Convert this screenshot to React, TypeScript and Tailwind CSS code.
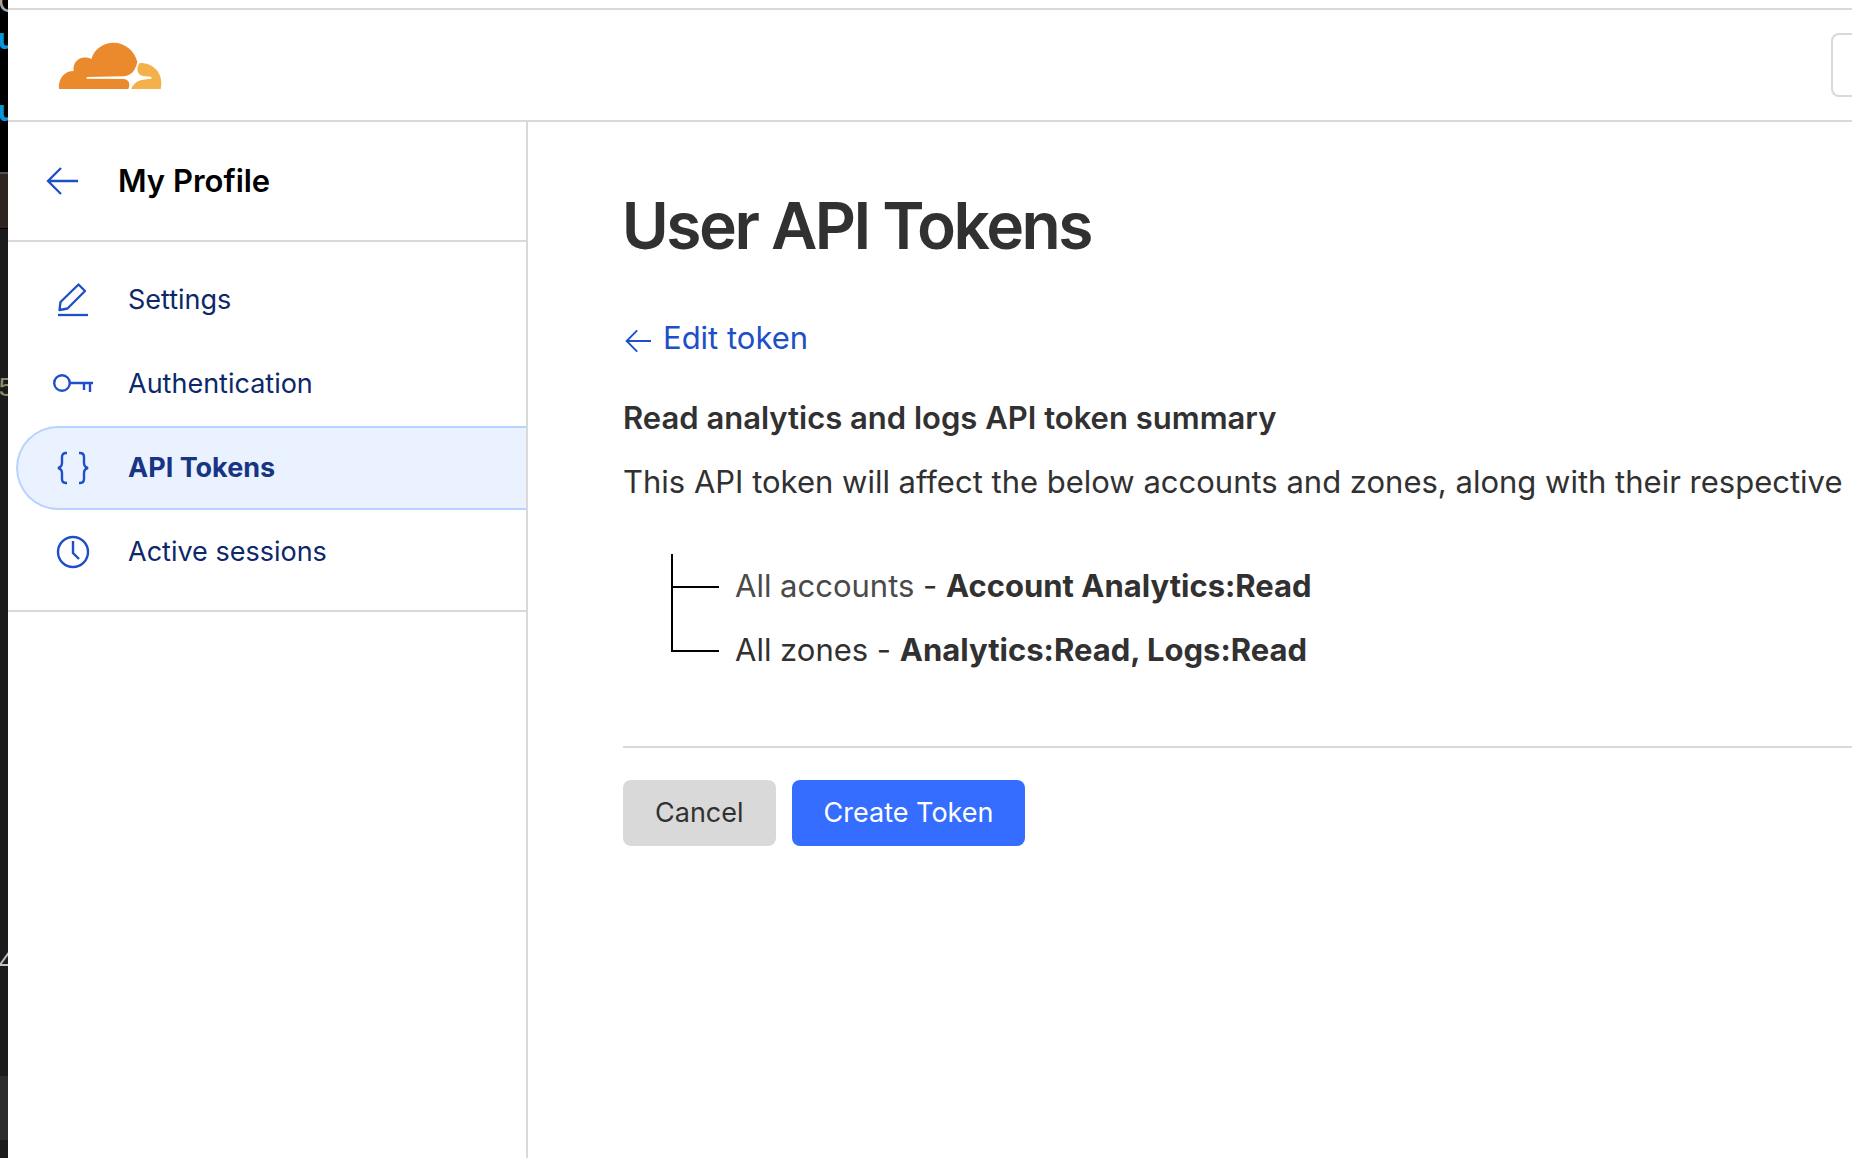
import React from "react";

type IconProps = { className?: string };

function CloudLogo() {
  return (
    <svg viewBox="176 123 312 144" width="104" height="48" aria-hidden="true">
      <path
        fill="#f3b04b"
        d="M421 189 C458 188 486 214 486 248 Q486 258 484 267 H396 C401 252 413 242 430 239 L455 236 Q459 233 455 230 L432 228 C418 226 411 214 416 198 Z"
      />
      <path
        fill="#eb8a2d"
        d="M179 267 C176 236 195 213 223 213 C219 187 242 163 276 177 C284 149 310 128 343 128 C377 128 406 152 414 186 C408 212 396 227 372 229 L263 231 Q259 234 263 236 L374 237 C390 239 393 253 387 267 Z"
      />
    </svg>
  );
}

function ArrowLeftIcon({ className }: IconProps) {
  return (
    <svg className={className} viewBox="0 0 32 28" fill="none" stroke="currentColor" strokeWidth="2.3" aria-hidden="true">
      <path d="M15 1 2 14l13 13M2 14h30" />
    </svg>
  );
}

function PencilIcon() {
  return (
    <svg width="40" height="40" viewBox="0 0 40 40" fill="none" stroke="#1d4fc8" strokeWidth="2.3" aria-hidden="true">
      <path d="M25.500 4.500 32 11 14.500 28.500 6.500 30 7.500 22Z" strokeLinejoin="round" />
      <path d="M5 35h30" />
    </svg>
  );
}

function KeyIcon() {
  return (
    <svg width="40" height="40" viewBox="0 0 40 40" fill="none" stroke="#1d4fc8" strokeWidth="2.4" aria-hidden="true">
      <circle cx="9" cy="19" r="7.800" />
      <path d="M17 19h23M31 19v7M37 19v9" />
    </svg>
  );
}

function BracesIcon() {
  return (
    <svg width="40" height="40" viewBox="0 0 40 40" fill="none" stroke="#1d4fc8" strokeWidth="2.4" aria-hidden="true">
      <path d="M14 5h-1q-4 0-4 4v6q0 4-4 5 4 1 4 5v6q0 4 4 4h1" />
      <path d="M26 5h1q4 0 4 4v6q0 4 4 5-4 1-4 5v6q0 4-4 4h-1" />
    </svg>
  );
}

function ClockIcon() {
  return (
    <svg width="40" height="40" viewBox="0 0 40 40" fill="none" stroke="#1d4fc8" strokeWidth="2.4" aria-hidden="true">
      <circle cx="20" cy="20" r="15" />
      <path d="M20 9v12l6 6" />
    </svg>
  );
}

const navItems = [
  { label: "Settings", Icon: PencilIcon, active: false },
  { label: "Authentication", Icon: KeyIcon, active: false },
  { label: "API Tokens", Icon: BracesIcon, active: true },
  { label: "Active sessions", Icon: ClockIcon, active: false },
];

const resources = [
  { scope: "All accounts", permissions: "Account Analytics:Read", tone: "text-[#4a4a4a]" },
  { scope: "All zones", permissions: "Analytics:Read, Logs:Read", tone: "text-[#313131]" },
];

function BackgroundWindow() {
  return (
    <div
      aria-hidden="true"
      className="flex w-2 shrink-0 flex-col overflow-hidden bg-[#1b1b1b] font-['Liberation_Mono',monospace] text-[28px]"
    >
      <div className="h-[172px] overflow-hidden bg-black font-['Inter',sans-serif] font-bold text-[#0a95dd]">
        <div className="-ml-0.5">
          <div className="-mt-3.5 h-[35px] font-normal leading-8 text-[#a8a8a8]">C</div>
          <div className="h-[72px] leading-9">u</div>
          <div className="leading-9">u</div>
        </div>
      </div>
      <div className="h-14 border-t-2 border-[#55504c] bg-[#2f2520]" />
      <div className="h-px bg-black" />
      <div className="-ml-0.5 pt-[142px] leading-9 text-[#8b8f68]">5</div>
      <div className="-ml-0.5 pt-[538px] leading-9 text-[#c4c4c4]">4</div>
      <div className="mt-[95px] h-16 bg-[#2a2c2e]" />
    </div>
  );
}

export default function App() {
  return (
    <div className="flex min-h-screen overflow-hidden bg-white font-['Inter',sans-serif] text-[#313131]">
      <BackgroundWindow />
      <div className="flex min-w-0 flex-1 flex-col pt-2">
        <header className="flex h-[114px] items-center justify-between border-y-2 border-[#d9d9d9] pl-[50px]">
          <a href="#home" aria-label="Cloudflare">
            <CloudLogo />
          </a>
          <button
            type="button"
            aria-label="Open menu"
            className="h-16 w-[21px] rounded-l-lg border-2 border-r-0 border-[#d9d9d9]"
          />
        </header>
        <div className="flex flex-1">
          <aside className="w-[520px] shrink-0 border-r-2 border-[#d9d9d9]">
            <div className="flex h-[120px] items-center gap-10 border-b-2 border-[#d9d9d9] pl-[38px]">
              <a href="#back" aria-label="Back" className="text-[#1d4fc8]">
                <ArrowLeftIcon className="h-7 w-8" />
              </a>
              <h2 className="text-[31px] font-semibold leading-[48px] text-black">My Profile</h2>
            </div>
            <nav className="border-b-2 border-[#d9d9d9] py-4 pl-2">
              {navItems.map(({ label, Icon, active }) => (
                <a
                  key={label}
                  href="#nav"
                  aria-current={active ? "page" : undefined}
                  className={
                    active
                      ? "flex h-[84px] items-center gap-[35px] rounded-l-full border-2 border-r-0 border-[#b9d2ff] bg-[#ebf2ff] pl-[35px] text-[27px] font-bold leading-10 text-[#173583]"
                      : "flex h-[84px] items-center gap-[35px] pl-[37px] text-[27px] leading-10 text-[#0c2869]"
                  }
                >
                  <Icon />
                  {label}
                </a>
              ))}
            </nav>
          </aside>
          <main className="min-w-0 flex-1 pl-[95px] pt-16 text-[31px] leading-[48px]">
            <h1 className="font-['Inter_Tight','Inter',sans-serif] text-[64px] font-semibold leading-[80px]">
              User API Tokens
            </h1>
            <a href="#edit" className="mt-12 flex items-center gap-3 text-[#1d4fc8]">
              <ArrowLeftIcon className="mt-1.5 ml-0.5 h-6 w-[26px]" />
              Edit token
            </a>
            <h2 className="mt-8 font-semibold">Read analytics and logs API token summary</h2>
            <p className="mt-4 whitespace-nowrap">
              This API token will affect the below accounts and zones, along with their respective
            </p>
            <ul className="mt-12 pl-12">
              {resources.map(({ scope, permissions, tone }, index) => (
                <li key={scope} className="flex h-16 items-center">
                  <span
                    className={
                      index === resources.length - 1
                        ? "mr-4 flex h-16 w-12 items-start border-black"
                        : "mr-4 flex h-16 w-12 items-center border-l-2 border-black"
                    }
                  >
                    {index === resources.length - 1 ? (
                      <span className="h-[34px] w-12 border-b-2 border-l-2 border-black" />
                    ) : (
                      <span className="mt-0.5 h-0.5 w-full bg-black" />
                    )}
                  </span>
                  <span>
                    <span className={tone}>{scope}</span> - <strong className="font-bold">{permissions}</strong>
                  </span>
                </li>
              ))}
            </ul>
            <div className="mt-16 flex gap-4 border-t-2 border-[#d9d9d9] pt-8 text-[27px]">
              <button type="button" className="h-[66px] rounded-lg bg-[#d9d9d9] px-8">
                Cancel
              </button>
              <button type="button" className="h-[66px] rounded-lg bg-[#346dff] px-8 text-white">
                Create Token
              </button>
            </div>
          </main>
        </div>
      </div>
    </div>
  );
}
